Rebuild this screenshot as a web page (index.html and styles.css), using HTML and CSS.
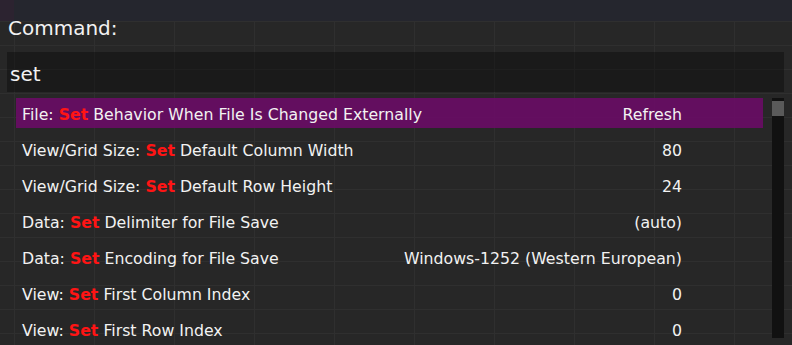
FILE: index.html
```html
<!DOCTYPE html>
<html>
<head>
<meta charset="utf-8">
<link rel="stylesheet" href="styles.css">
</head>
<body>
<div class="palette">
  <div class="label">Command:</div>
  <div class="input">set</div>
  <div class="results">
    <ul class="list">
      <li class="item selected"><span class="name">File: <b>Set</b> Behavior When File Is Changed Externally</span><span class="value">Refresh</span></li>
      <li class="item"><span class="name">View/Grid Size: <b>Set</b> Default Column Width</span><span class="value">80</span></li>
      <li class="item"><span class="name">View/Grid Size: <b>Set</b> Default Row Height</span><span class="value">24</span></li>
      <li class="item"><span class="name">Data: <b>Set</b> Delimiter for File Save</span><span class="value">(auto)</span></li>
      <li class="item"><span class="name">Data: <b>Set</b> Encoding for File Save</span><span class="value">Windows-1252 (Western European)</span></li>
      <li class="item"><span class="name">View: <b>Set</b> First Column Index</span><span class="value">0</span></li>
      <li class="item"><span class="name">View: <b>Set</b> First Row Index</span><span class="value">0</span></li>
    </ul>
    <div class="scrollbar"><div class="thumb"></div></div>
  </div>
</div>
</body>
</html>
```
FILE: styles.css
```css
html, body {
  margin: 0;
  padding: 0;
}
body {
  width: 792px;
  height: 345px;
  overflow: hidden;
  font-family: "DejaVu Sans", sans-serif;
  color: #f2f2f2;
  background-color: #272727;
  background-image:
    linear-gradient(#2c2330, #2c2330),
    linear-gradient(#25262e, #25262e),
    linear-gradient(to right, #2f2f2f 1px, transparent 1px),
    linear-gradient(to bottom, #2f2f2f 1px, transparent 1px);
  background-size: 14px 21px, 100% 21px, 80px 100%, 100% 24px;
  background-position: 0 0, 0 0, 14px 0, 0 21px;
  background-repeat: no-repeat, no-repeat, repeat-x, repeat-y;
}
.palette {
  padding: 0 8px 0 7px;
}
.label {
  font-size: 20px;
  line-height: 24px;
  padding: 16px 0 0 1px;
  height: 52px;
  box-sizing: border-box;
}
.input {
  height: 40px;
  background: rgba(0, 0, 0, 0.32);
  font-size: 20px;
  line-height: 40px;
  padding: 2px 0 0 3px;
  box-sizing: border-box;
}
.results {
  display: flex;
  margin-top: 6px;
  gap: 9px;
}
.list {
  list-style: none;
  margin: 0 0 0 9px;
  padding: 0;
  flex: 1;
  display: flex;
  flex-direction: column;
  gap: 6px;
}
.item {
  height: 30px;
  box-sizing: border-box;
  display: flex;
  align-items: center;
  justify-content: space-between;
  padding: 3px 81px 0 6px;
  font-size: 15.75px;
}
.item.selected {
  background: rgba(112, 8, 107, 0.82);
}
.item b {
  color: #ff1414;
  font-weight: bold;
}
.scrollbar {
  width: 12px;
  height: 240px;
  background: #111111;
  padding-top: 3px;
  box-sizing: border-box;
}
.thumb {
  height: 15px;
  background: #5a5a5a;
}
```
